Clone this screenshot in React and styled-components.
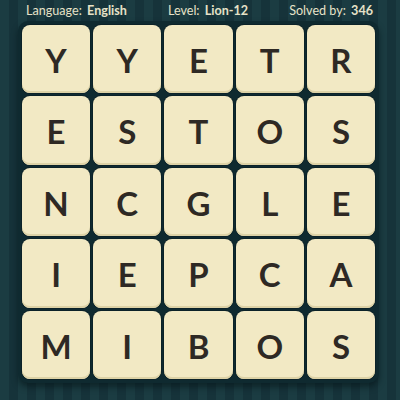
import React from "react";
import styled, { createGlobalStyle } from "styled-components";

const rows = ["YYETR", "ESTOS", "NCGLE", "IEPCA", "MIBOS"];

const Global = createGlobalStyle`
  html, body {
    margin: 0;
    padding: 0;
  }
  body {
    width: 400px;
    height: 400px;
    overflow: hidden;
    background-color: #1a3a40;
    background-image: repeating-linear-gradient(
      90deg,
      #1b3c42 0px,
      #1b3c42 9px,
      #16333a 9px,
      #16333a 18px
    );
    font-family: Lato, "Open Sans", sans-serif;
  }
`;

const App = () => {
  return (
    <>
      <Global />
      <Page>
        <Header>
          <Info>
            Language: <b>English</b>
          </Info>
          <Info>
            Level: <b>Lion-12</b>
          </Info>
          <Info>
            Solved by: <b>346</b>
          </Info>
        </Header>
        <Board>
          {rows.map((row, r) =>
            row.split("").map((ch, c) => <Tile key={r + "-" + c}>{ch}</Tile>)
          )}
        </Board>
      </Page>
    </>
  );
};

const Page = styled.div`
  width: 400px;
  height: 400px;
  display: flex;
  flex-direction: column;
`;

const Header = styled.div`
  height: 21px;
  display: flex;
  align-items: center;
  justify-content: space-between;
  padding: 0 27px 0 26px;
  box-sizing: border-box;
`;

const Info = styled.div`
  color: #e6e2c8;
  font-size: 12.6px;
  b {
    font-weight: 700;
    margin-left: 2px;
  }
`;

const Board = styled.div`
  margin-left: 18px;
  width: 361px;
  box-sizing: border-box;
  padding: 4px;
  background: #0f2a30;
  border-radius: 10px;
  box-shadow: 0 4px 6px rgba(5, 20, 24, 0.6);
  display: grid;
  grid-template-columns: repeat(5, 1fr);
  grid-auto-rows: 68.3px;
  gap: 3.2px;
`;

const Tile = styled.div`
  background: #f2e9c4;
  border-radius: 8px;
  box-shadow: inset 0 -2px 0 #ddd2a6, 0 0 0 1px #0c2228;
  display: flex;
  align-items: center;
  justify-content: center;
  color: #2e2924;
  font-family: Lato, sans-serif;
  font-weight: 700;
  font-size: 33px;
  padding-top: 1px;
`;

export default App;
